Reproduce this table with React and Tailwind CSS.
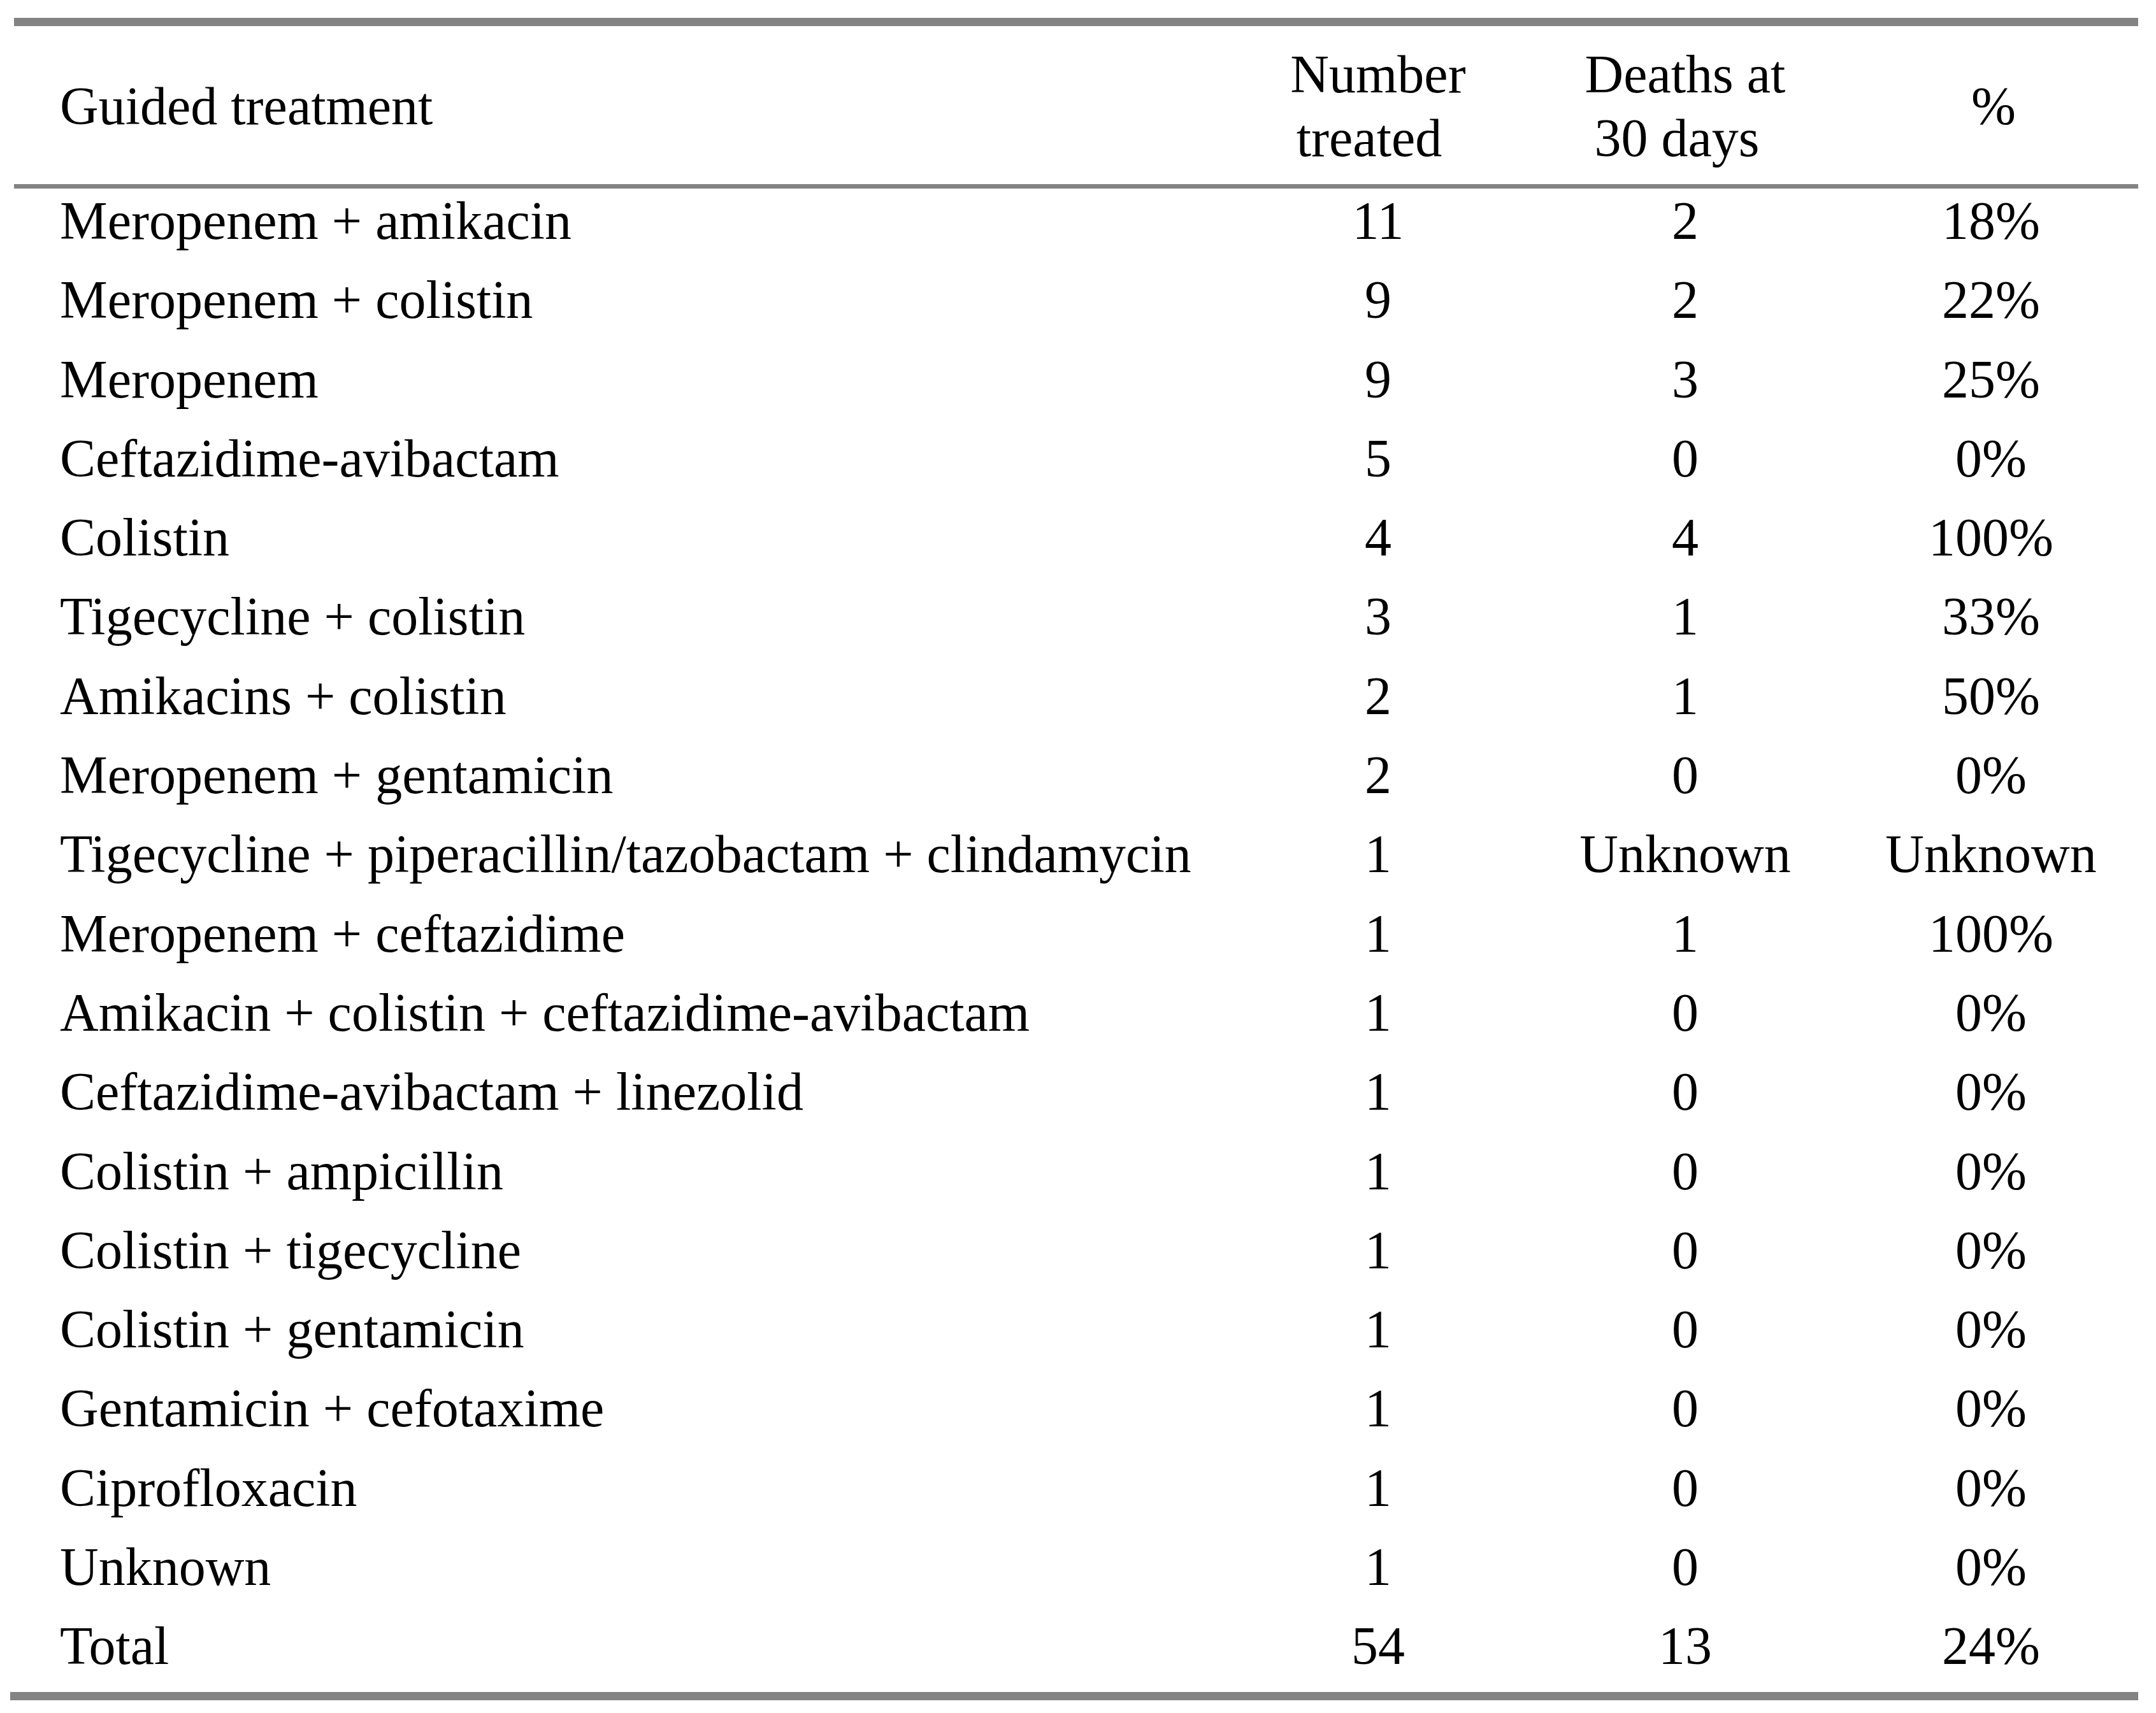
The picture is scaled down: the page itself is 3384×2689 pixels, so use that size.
import React from "react";

const rows = [
  ["Meropenem + amikacin", "11", "2", "18%"],
  ["Meropenem + colistin", "9", "2", "22%"],
  ["Meropenem", "9", "3", "25%"],
  ["Ceftazidime-avibactam", "5", "0", "0%"],
  ["Colistin", "4", "4", "100%"],
  ["Tigecycline + colistin", "3", "1", "33%"],
  ["Amikacins + colistin", "2", "1", "50%"],
  ["Meropenem + gentamicin", "2", "0", "0%"],
  ["Tigecycline + piperacillin/tazobactam + clindamycin", "1", "Unknown", "Unknown"],
  ["Meropenem + ceftazidime", "1", "1", "100%"],
  ["Amikacin + colistin + ceftazidime-avibactam", "1", "0", "0%"],
  ["Ceftazidime-avibactam + linezolid", "1", "0", "0%"],
  ["Colistin + ampicillin", "1", "0", "0%"],
  ["Colistin + tigecycline", "1", "0", "0%"],
  ["Colistin + gentamicin", "1", "0", "0%"],
  ["Gentamicin + cefotaxime", "1", "0", "0%"],
  ["Ciprofloxacin", "1", "0", "0%"],
  ["Unknown", "1", "0", "0%"],
  ["Total", "54", "13", "24%"],
];

// column widths so the centres fall where the printed table has them
const cols = "grid grid-cols-[1829px_480px_484px_476px]";

export default function App() {
  return (
    <div
      className="w-[3384px] h-[2689px] bg-white text-black text-[84px]"
      style={{ fontFamily: '"Liberation Serif", "Times New Roman", serif' }}
    >
      <div className="pt-[28px]">
        <div className="ml-[22px] w-[3334px] h-[13px] bg-[#838383]" />

        {/* header */}
        <div className={`${cols} h-[248px] pl-[94px] pt-[3px] items-center leading-[100px]`}>
          <div>Guided treatment</div>
          <div className="text-center">
            <div>Number</div>
            <div className="pr-[28px]">treated</div>
          </div>
          <div className="text-center">
            <div>Deaths at</div>
            <div className="pr-[26px]">30 days</div>
          </div>
          <div className="text-center pl-[8px]">%</div>
        </div>

        <div className="ml-[22px] w-[3334px] h-[7px] bg-[#838383]" />

        {/* body */}
        <div>
          {rows.map(([name, n, d, pct]) => (
            <div
              key={name}
              className={`${cols} h-[124.3px] pl-[94px] leading-[101.3px] whitespace-nowrap`}
            >
              <div>{name}</div>
              <div className="text-center">{n}</div>
              <div className="text-center">{d}</div>
              <div className="text-center">{pct}</div>
            </div>
          ))}
        </div>

        <div className="ml-[16px] -mt-[2px] w-[3340px] h-[13px] bg-[#838383]" />
      </div>
    </div>
  );
}
